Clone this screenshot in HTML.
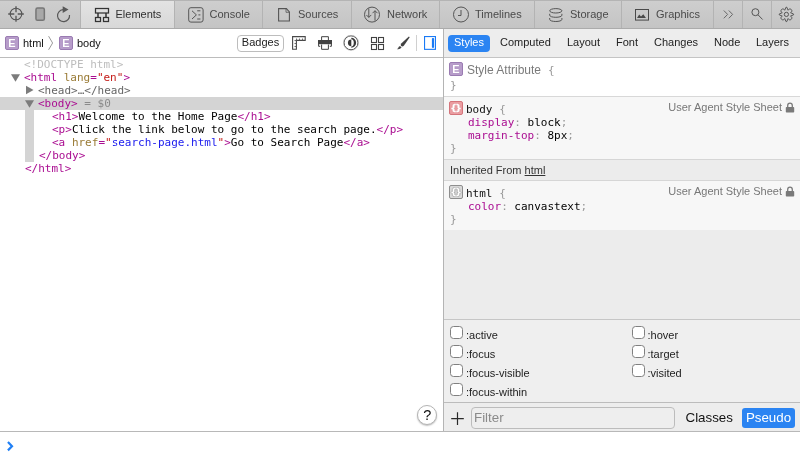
<!DOCTYPE html>
<html lang="en">
<head>
<meta charset="utf-8">
<title>Web Inspector</title>
<style>
*{box-sizing:border-box;margin:0;padding:0}
html,body{width:800px;height:461px;overflow:hidden;background:#fff}
body{font-family:"Liberation Sans",sans-serif;font-size:11px;color:#000;position:relative}
#root{position:absolute;left:0;top:0;width:800px;height:461px;will-change:transform}
.abs{position:absolute}
#tabbar{left:0;top:0;width:800px;height:29px;background:linear-gradient(#cecece,#c4c4c4);border-top:1px solid #b4b4b4;border-bottom:1px solid #ababab}
.tab{position:absolute;top:0;height:27px;border-left:1px solid #b3b3b3;color:#4a4a4a;font-size:11px;line-height:27px;white-space:nowrap}
.tab.sel{background:linear-gradient(#e3e3e3,#d8d8d8);color:#303030;border-right:1px solid #b3b3b3}
.tab span{position:absolute;top:0}
.tab svg{position:absolute}
#nav{left:0;top:29px;width:443px;height:29px;background:#fff;border-bottom:1px solid #bcbcbc}
#left{left:0;top:57px;width:443px;height:374px}
#divider{left:443px;top:29px;width:1px;height:402px;background:#b4b4b4}
#right{left:444px;top:29px;width:356px;height:402px;background:#ececec}
#rnav{left:0;top:0;width:356px;height:29px;background:#ededed;border-bottom:1px solid #c4c4c4}
.rt{position:absolute;top:0;line-height:27px;font-size:11px;color:#222}
#console{left:0;top:431px;width:800px;height:30px;background:#fff;border-top:1px solid #b8b8b8}
.mono{font-family:"DejaVu Sans Mono","Liberation Mono",monospace;font-size:11px}
.line{position:absolute;left:0;height:13px;line-height:13px;white-space:pre;width:443px}
.tag{color:#aa0d91}.an{color:#997a34}.av{color:#c41a16}.lnk{color:#1a1aee}.gr{color:#666}.lg{color:#bdbdbd}
.ebadge{position:absolute;width:14px;height:14px;border-radius:2px;background:#b79dca;border:1px solid #9a7bb2;color:#fff;font-size:11px;font-weight:bold;line-height:12px;text-align:center}
.eg{text-shadow:0 0 1px #9674b0}
.sec{position:absolute;left:0;width:356px;background:#f7f7f7}
.rbadge{position:absolute;width:14px;height:14px;border-radius:2px;font-family:"DejaVu Sans",sans-serif;font-size:8.500px;font-weight:bold;line-height:12px;text-align:center;letter-spacing:-1.100px;padding-right:1.100px;-webkit-text-stroke:0.350px #fff;text-shadow:0 0 1px rgba(120,20,40,0.500)}
.uas{line-height:14px;font-family:"Liberation Sans",sans-serif;font-size:11px;color:#777}
.prop{color:#aa0d91}
.cb{position:absolute;width:13px;height:13px;border:1px solid #808080;border-radius:3.500px;background:#fff}
.pl{position:absolute;font-size:11px;color:#222;line-height:13px}
</style>
</head>
<body>
<div id="root">
<div id="tabbar" class="abs">
  <!-- left controls -->
  <svg class="abs" style="left:8px;top:5px" width="16" height="16" viewBox="0 0 16 16" fill="none"><path d="M8 0.200v6.100M8 9.700v6.100M0.200 8h6.100M9.700 8h6.100" stroke="#747474" stroke-width="1.800"/><circle cx="8" cy="8" r="5.800" stroke="#565656" stroke-width="1.100"/></svg>
  <svg class="abs" style="left:34px;top:6px" width="12" height="15" viewBox="0 0 12 15"><rect x="1.950" y="1.050" width="8.400" height="12.200" rx="1.600" fill="#a8a8a8" stroke="#767676" stroke-width="1.500"/></svg>
  <svg class="abs" style="left:55px;top:4px" width="17" height="19" viewBox="0 0 17 19" fill="none" stroke="#585858" stroke-width="1.200"><path d="M14.500 10a6 6 0 1 1 -6.500 -5.300"/><path d="M7.700 1.200l5.800 3.300l-5.800 3.400z" fill="#585858" stroke="none"/></svg>

  <div class="tab sel" style="left:80px;width:95px">
    <svg style="left:13px;top:6px" width="16" height="16" viewBox="0 0 16 16" fill="none" stroke="#333" stroke-width="1.25"><rect x="1.500" y="1.500" width="13" height="4.500"/><rect x="1.500" y="10.500" width="5" height="4"/><rect x="9.500" y="10.500" width="5" height="4"/><path d="M4 6V10.500M12 6V10.500" stroke-width="1.500"/></svg>
    <span style="left:34.500px">Elements</span>
  </div>
  <div class="tab" style="left:174px;width:88px">
    <svg style="left:12px;top:5px" width="18" height="18" viewBox="0 0 18 18" fill="none" stroke="#555" stroke-width="1"><rect x="1.700" y="1.700" width="14.400" height="14.400" rx="2.200"/><path d="M5 4.800L9.400 8.900L5 13M10.200 4.800H13.400M11.400 8.900H13.400M10.200 13H13.400"/></svg>
    <span style="left:34.500px">Console</span>
  </div>
  <div class="tab" style="left:262px;width:89px">
    <svg style="left:14px;top:6px" width="14" height="16" viewBox="0 0 14 16" fill="none" stroke="#555" stroke-width="1.1"><path d="M1.600 1.600H9.400L12.400 4.900V14H1.600Z"/><path d="M9 1.800V5.300H12.200" stroke-width="0.800"/></svg>
    <span style="left:35px">Sources</span>
  </div>
  <div class="tab" style="left:351px;width:88px">
    <svg style="left:11px;top:5px" width="18" height="18" viewBox="0 0 18 18" fill="none" stroke="#555" stroke-width="1"><circle cx="9" cy="8.600" r="7.500"/><path d="M5.800 2.400V11.300M3.300 8.900L5.800 11.400L8.300 8.900M12 14.700V4.800M9.500 7.200L12 4.700L14.500 7.200"/></svg>
    <span style="left:35px">Network</span>
  </div>
  <div class="tab" style="left:439px;width:95px">
    <svg style="left:12px;top:5px" width="18" height="18" viewBox="0 0 18 18" fill="none" stroke="#555" stroke-width="1"><circle cx="9" cy="8.500" r="7.500"/><path d="M9 4V9.500H6"/></svg>
    <span style="left:35px">Timelines</span>
  </div>
  <div class="tab" style="left:534px;width:87px">
    <svg style="left:13px;top:5px" width="16" height="18" viewBox="0 0 16 18" fill="none" stroke="#555" stroke-width="1"><ellipse cx="7.800" cy="4.800" rx="6.100" ry="2.200"/><path d="M1.700 7.800V9.200C1.700 12 13.900 12 13.900 9.200V7.800M1.700 12V13.400C1.700 16.200 13.900 16.200 13.900 13.400V12"/></svg>
    <span style="left:35px">Storage</span>
  </div>
  <div class="tab" style="left:621px;width:92px">
    <svg style="left:12px;top:7px" width="16" height="14" viewBox="0 0 16 14" fill="none" stroke="#4a4a4a" stroke-width="1"><rect x="1.500" y="1.500" width="13" height="10.600"/><path d="M3 10L5.200 6.600L7 8.600L9.300 6.200L12 10Z" fill="#4a4a4a" stroke="none"/></svg>
    <span style="left:34px">Graphics</span>
  </div>
  <div class="tab" style="left:713px;width:29px">
    <svg style="left:8px;top:8px" width="13" height="11" viewBox="0 0 13 11" fill="none" stroke="#686868" stroke-width="1"><path d="M1.800 1.500L5.600 5.400L1.800 9.300M6.800 1.500L10.600 5.400L6.800 9.300"/></svg>
  </div>
  <div class="tab" style="left:742px;width:29px">
    <svg style="left:7px;top:6px" width="15" height="15" viewBox="0 0 15 15" fill="none" stroke="#555" stroke-width="1"><circle cx="5.400" cy="5.200" r="3.500"/><path d="M8 7.800L12.600 12.500"/></svg>
  </div>
  <div class="tab" style="left:771px;width:29px">
    <svg style="left:6px;top:5px" width="17" height="17" viewBox="0 0 17 17" fill="none" stroke="#555" stroke-width="1"><circle cx="8.400" cy="8.400" r="2.100"/><path d="M6.68 4.24L8.02 1.21L8.78 1.21L10.12 4.24C11.91 0.88 15.92 4.89 12.56 6.68L15.59 8.02L15.59 8.78L12.56 10.12C15.92 11.91 11.91 15.92 10.12 12.56L8.78 15.59L8.02 15.59L6.68 12.56C4.89 15.92 0.88 11.91 4.24 10.12L1.21 8.78L1.21 8.02L4.24 6.68C0.88 4.89 4.89 0.88 6.68 4.24Z" stroke-linejoin="round"/></svg>
  </div>
</div>

<div id="nav" class="abs">
  <div class="ebadge" style="left:5px;top:7px"><span class="eg">E</span></div>
  <span class="abs" style="left:23px;top:0;line-height:28px;font-size:11px;color:#111">html</span>
  <svg class="abs" style="left:47px;top:5px" width="8" height="18" viewBox="0 0 8 18" fill="none" stroke="#9a9a9a" stroke-width="1"><path d="M1.600 2.200l4 6.800l-4 6.800"/></svg>
  <div class="ebadge" style="left:59px;top:7px"><span class="eg">E</span></div>
  <span class="abs" style="left:77px;top:0;line-height:28px;font-size:11px;color:#111">body</span>
  <div class="abs" style="left:237px;top:6px;width:47px;height:17px;border:1px solid #bdbdbd;border-radius:4px;background:#fff;font-size:11px;line-height:13px;text-align:center;color:#222">Badges</div>
  <svg class="abs" style="left:291px;top:6px" width="16" height="16" viewBox="0 0 16 16" fill="none" stroke="#484848" stroke-width="1.1"><path d="M1.600 1.600H14.200V5.400H5.400V14.300H1.600Z"/><path d="M5.500 5.400V3.500M8.500 5.400V3.500M11.500 5.400V3.500M5.400 5.500H3.500M5.400 8.500H3.500M5.400 11.500H3.500" stroke-width="0.900" stroke="#5c5c5c"/></svg>
  <svg class="abs" style="left:317px;top:6px" width="16" height="16" viewBox="0 0 16 16" fill="none" stroke="#424242" stroke-width="1"><rect x="1" y="5" width="14" height="4.200" fill="#424242" stroke="none"/><path d="M4.600 5V1.700H11.400V5M4.600 9.500V14.300H11.400V9.500M1.600 9V11.300H3.200M14.400 9V11.300H12.800"/></svg>
  <svg class="abs" style="left:343px;top:6px" width="16" height="17" viewBox="0 0 16 17" fill="none"><circle cx="8" cy="7.800" r="7" stroke="#444" stroke-width="1"/><circle cx="8" cy="7.800" r="7.600" stroke="#bbb" stroke-width="0.600"/><path d="M8.300 2.800A4.800 5 0 0 1 8.300 12.800V11.400A2.500 3.600 0 0 0 8.300 4.200Z" fill="#383838"/><path d="M8.300 4.400A3.400 3.400 0 0 0 8.300 11.200Z" fill="#383838"/></svg>
  <svg class="abs" style="left:370px;top:6px" width="16" height="16" viewBox="0 0 16 16" fill="none" stroke="#424242" stroke-width="1.1"><rect x="1.500" y="2.500" width="5" height="5"/><rect x="8.500" y="2.500" width="5" height="5"/><rect x="1.500" y="9.500" width="5" height="5"/><rect x="8.500" y="9.500" width="5" height="5"/></svg>
  <svg class="abs" style="left:396px;top:6px" width="15" height="16" viewBox="0 0 15 16"><path d="M12.900 1.600L13.700 2.300L8 10.600Q6.500 12.100 5.200 11.100Q4.100 10 5.200 8.500Z" fill="#424242"/><path d="M4.300 11.300L5.600 12.600Q3.800 14.800 0.800 14.100Q2.500 13.500 2.500 12.200Q3.100 10.800 4.300 11.300Z" fill="#424242"/></svg>
  <div class="abs" style="left:416px;top:6px;width:1px;height:16px;background:#d0d0d0"></div>
  <svg class="abs" style="left:423px;top:6px" width="14" height="16" viewBox="0 0 14 16"><rect x="1.550" y="1.550" width="10.900" height="12.800" fill="#fff" stroke="#1a7af5" stroke-width="1.100"/><rect x="8.900" y="3" width="2.200" height="9.900" rx="0.800" fill="#1a7af5"/></svg>
</div>

<div id="left" class="abs mono">
  <div class="line" style="top:1px"><span class="lg" style="margin-left:24px">&lt;!DOCTYPE html&gt;</span></div>
  <div class="line" style="top:14px"><span class="tag" style="margin-left:24px">&lt;html <span class="an">lang</span>=<span class="av">"en"</span>&gt;</span></div>
  <div class="line" style="top:27px"><span class="gr" style="margin-left:38px">&lt;head&gt;…&lt;/head&gt;</span></div>
  <div class="line" style="top:40px;background:#d4d4d4"><span class="tag" style="margin-left:38px">&lt;body&gt;</span><span style="color:#8a8a8a"> = $0</span></div>
  <div class="line" style="top:53px"><span class="tag" style="margin-left:52px">&lt;h1&gt;</span>Welcome to the Home Page<span class="tag">&lt;/h1&gt;</span></div>
  <div class="line" style="top:66px"><span class="tag" style="margin-left:52px">&lt;p&gt;</span>Click the link below to go to the search page.<span class="tag">&lt;/p&gt;</span></div>
  <div class="line" style="top:79px"><span class="tag" style="margin-left:52px">&lt;a <span class="an">href</span>=<span class="av">"<span class="lnk">search-page.html</span>"</span>&gt;</span>Go to Search Page<span class="tag">&lt;/a&gt;</span></div>
  <div class="line" style="top:92px"><span class="tag" style="margin-left:39px">&lt;/body&gt;</span></div>
  <div class="line" style="top:105px"><span class="tag" style="margin-left:25px">&lt;/html&gt;</span></div>
  <div class="abs" style="left:25px;top:53px;width:9px;height:52px;background:#d4d4d4"></div>
  <svg class="abs" style="left:11px;top:17px" width="9" height="8" viewBox="0 0 9 8"><path d="M0 0.300h9l-4.500 7.500z" fill="#7c7c7c"/></svg>
  <svg class="abs" style="left:26px;top:28px" width="8" height="10" viewBox="0 0 8 10"><path d="M0 0.700l7.500 4.300l-7.500 4.300z" fill="#7c7c7c"/></svg>
  <svg class="abs" style="left:25px;top:43px" width="9" height="8" viewBox="0 0 9 8"><path d="M0 0.300h9l-4.500 7.500z" fill="#7c7c7c"/></svg>
  <div class="abs" style="left:417px;top:348px;width:20px;height:20px;border:1px solid #b4b4b4;border-radius:10px;background:#fff;box-shadow:0 1px 1.500px rgba(0,0,0,0.250);font-family:'Liberation Sans',sans-serif;font-size:14.500px;line-height:19px;text-align:center;color:#111;padding-left:0.500px">?</div>
</div>

<div id="divider" class="abs"></div>

<div id="right" class="abs">
  <div id="rnav" class="abs">
    <div class="abs" style="left:4px;top:6px;width:42px;height:17px;border-radius:4px;background:#2b84f2;color:#fff;font-size:11px;line-height:14px;text-align:center">Styles</div>
    <span class="rt" style="left:56px">Computed</span>
    <span class="rt" style="left:123px">Layout</span>
    <span class="rt" style="left:172px">Font</span>
    <span class="rt" style="left:210px">Changes</span>
    <span class="rt" style="left:270px">Node</span>
    <span class="rt" style="left:312px">Layers</span>
  </div>
  <!-- Style Attribute -->
  <div class="sec mono" style="top:29px;height:38px;background:#fff">
    <div class="ebadge" style="left:5px;top:4px;font-family:'Liberation Sans',sans-serif"><span class="eg">E</span></div>
    <span class="abs" style="left:23px;top:5px;line-height:14px;font-family:'Liberation Sans',sans-serif;font-size:12px;color:#7a7a7a">Style Attribute</span>
    <span class="abs" style="left:104px;top:6px;line-height:13px;color:#999">{</span>
    <span class="abs" style="left:6px;top:21px;line-height:13px;color:#999">}</span>
  </div>
  <div class="abs" style="left:0;top:67px;width:356px;height:1px;background:#d8d8d8"></div>
  <!-- body rule -->
  <div class="sec mono" style="top:68px;height:62px">
    <div class="rbadge" style="left:5px;top:4px;background:#eb9da1;border:1px solid #d4747b;color:#fff">{}</div>
    <span class="abs" style="left:22px;top:6px;line-height:13px;color:#111">body <span style="color:#999">{</span></span>
    <span class="abs" style="left:24px;top:19px;line-height:13px"><span class="prop">display</span><span style="color:#999">:</span> block<span style="color:#999">;</span></span>
    <span class="abs" style="left:24px;top:32px;line-height:13px"><span class="prop">margin-top</span><span style="color:#999">:</span> 8px<span style="color:#999">;</span></span>
    <span class="abs" style="left:6px;top:45px;line-height:13px;color:#999">}</span>
    <span class="abs uas" style="right:18px;top:3px">User Agent Style Sheet</span>
    <svg class="abs" style="right:5px;top:5px" width="10" height="11" viewBox="0 0 10 11"><rect x="0.800" y="5" width="8.400" height="5.600" rx="0.800" fill="#7a7a7a"/><path d="M2.700 5.200v-1.700a2.300 2.300 0 0 1 4.600 0v1.700" fill="none" stroke="#7a7a7a" stroke-width="1.300"/></svg>
  </div>
  <div class="abs" style="left:0;top:130px;width:356px;height:1px;background:#d6d6d6"></div>
  <div class="abs" style="left:0;top:131px;width:356px;height:20px;background:#ececec;font-size:11px;line-height:20px;color:#333;padding-left:6px">Inherited From <span style="text-decoration:underline">html</span></div>
  <div class="abs" style="left:0;top:151px;width:356px;height:1px;background:#d6d6d6"></div>
  <!-- html rule -->
  <div class="sec mono" style="top:152px;height:49px">
    <div class="rbadge" style="left:5px;top:4px;background:#dadada;border:1px solid #8e8e8e;color:#fff;text-shadow:0 0 1px #444,0 0 1px #555,0 0 1.500px #666">{}</div>
    <span class="abs" style="left:22px;top:6px;line-height:13px;color:#111">html <span style="color:#999">{</span></span>
    <span class="abs" style="left:24px;top:19px;line-height:13px"><span class="prop">color</span><span style="color:#999">:</span> canvastext<span style="color:#999">;</span></span>
    <span class="abs" style="left:6px;top:32px;line-height:13px;color:#999">}</span>
    <span class="abs uas" style="right:18px;top:3px">User Agent Style Sheet</span>
    <svg class="abs" style="right:5px;top:5px" width="10" height="11" viewBox="0 0 10 11"><rect x="0.800" y="5" width="8.400" height="5.600" rx="0.800" fill="#7a7a7a"/><path d="M2.700 5.200v-1.700a2.300 2.300 0 0 1 4.600 0v1.700" fill="none" stroke="#7a7a7a" stroke-width="1.300"/></svg>
  </div>
  <!-- pseudo -->
  <div class="abs" style="left:0;top:290px;width:356px;height:84px;background:#efefef;border-top:1px solid #c6c6c6;border-bottom:1px solid #bcbcbc">
    <div class="cb" style="left:6px;top:6px"></div><span class="pl" style="left:22px;top:9px">:active</span>
    <div class="cb" style="left:6px;top:25px"></div><span class="pl" style="left:22px;top:28px">:focus</span>
    <div class="cb" style="left:6px;top:44px"></div><span class="pl" style="left:22px;top:47px">:focus-visible</span>
    <div class="cb" style="left:6px;top:63px"></div><span class="pl" style="left:22px;top:66px">:focus-within</span>
    <div class="cb" style="left:188px;top:6px"></div><span class="pl" style="left:203.500px;top:9px">:hover</span>
    <div class="cb" style="left:188px;top:25px"></div><span class="pl" style="left:203.500px;top:28px">:target</span>
    <div class="cb" style="left:188px;top:44px"></div><span class="pl" style="left:203.500px;top:47px">:visited</span>
  </div>
  <!-- filter bar -->
  <div class="abs" style="left:0;top:374px;width:356px;height:28px;background:#ededed">
    <svg class="abs" style="left:7px;top:9px" width="13" height="13" viewBox="0 0 13 13" stroke="#2a2a2a" stroke-width="1.200"><path d="M6.500 0.300v12.600M0.200 6.600h12.600"/></svg>
    <div class="abs" style="left:27px;top:4px;width:204px;height:22px;border:1px solid #bcbcbc;border-radius:4px;background:#eee;font-size:13.330px;line-height:20px;color:#8a8a8a;padding-left:2px">Filter</div>
    <span class="abs" style="left:241.500px;top:1px;line-height:28px;font-size:13.330px;color:#111">Classes</span>
    <div class="abs" style="left:298px;top:5px;width:53px;height:20px;border-radius:3px;background:#2b84f2;color:#fff;font-size:13.330px;line-height:20px;text-align:center">Pseudo</div>
  </div>
</div>

<div id="console" class="abs">
  <svg class="abs" style="left:7px;top:9px" width="8" height="12" viewBox="0 0 8 12" fill="none" stroke="#2180f5" stroke-width="2.200" stroke-linecap="square"><path d="M1.700 1.800L5 5.200L1.700 8.600"/></svg>
</div>
</div>
</body>
</html>
